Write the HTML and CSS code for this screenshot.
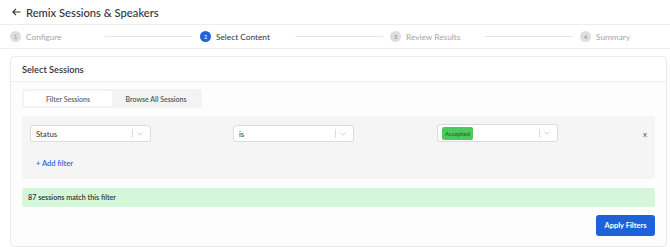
FILE: index.html
```html
<!DOCTYPE html>
<html lang="en">
<head>
    <meta charset="UTF-8">
    <meta name="viewport" content="width=device-width, initial-scale=1.0">
    <title>Remix Sessions &amp; Speakers</title>
    <link rel="stylesheet" href="styles.css">
</head>
<body>
    <header class="topbar">
        <svg class="back" width="9" height="8" viewBox="0 0 9 8"><path d="M8.5 4H1M4 0.8L0.9 4L4 7.2" fill="none" stroke="#333" stroke-width="1.1"/></svg>
        <h1 class="title">Remix Sessions &amp; Speakers</h1>
    </header>

    <nav class="steps">
        <div class="step">
            <div class="step-label"><span class="dot">1</span>Configure</div>
            <div class="step-line"></div>
        </div>
        <div class="step active">
            <div class="step-label"><span class="dot">2</span>Select Content</div>
            <div class="step-line"></div>
        </div>
        <div class="step">
            <div class="step-label"><span class="dot">3</span>Review Results</div>
            <div class="step-line"></div>
        </div>
        <div class="step">
            <div class="step-label"><span class="dot">4</span>Summary</div>
        </div>
    </nav>

    <main class="main">
        <section class="card">
            <div class="card-header">Select Sessions</div>
            <div class="card-body">
                <div class="tabs">
                    <div class="tab selected">Filter Sessions</div>
                    <div class="tab">Browse All Sessions</div>
                </div>

                <div class="filters">
                    <div class="filter-row">
                        <div class="select">
                            <span class="select-value">Status</span>
                            <span class="select-sep"></span>
                            <svg class="chev" width="6" height="4" viewBox="0 0 6 4"><path d="M0.5 0.7L3 3.2L5.5 0.7" fill="none" stroke="#c2c2c2" stroke-width="0.8"/></svg>
                        </div>
                        <div class="select">
                            <span class="select-value">is</span>
                            <span class="select-sep"></span>
                            <svg class="chev" width="6" height="4" viewBox="0 0 6 4"><path d="M0.5 0.7L3 3.2L5.5 0.7" fill="none" stroke="#c2c2c2" stroke-width="0.8"/></svg>
                        </div>
                        <div class="select tall">
                            <span class="select-value"><span class="badge">Accepted</span></span>
                            <span class="select-sep"></span>
                            <svg class="chev" width="6" height="4" viewBox="0 0 6 4"><path d="M0.5 0.7L3 3.2L5.5 0.7" fill="none" stroke="#c2c2c2" stroke-width="0.8"/></svg>
                        </div>
                        <span class="remove">x</span>
                    </div>
                    <div class="add-filter">+ Add filter</div>
                </div>

                <div class="match">87 sessions match this filter</div>

                <div class="actions">
                    <button type="button" class="apply">Apply Filters</button>
                </div>
            </div>
        </section>
    </main>
</body>
</html>
```

FILE: styles.css
```css
body {
    margin: 0;
    font-family: Lato, "Open Sans", sans-serif;
    color: #333;
    background: #fff;
}
.topbar {
    height: 24px;
    display: flex;
    align-items: center;
    padding-left: 12px;
    border-bottom: 1px solid #ececec;
}
.back {
    margin-right: 5px;
}
.title {
    margin: 0;
    font-size: 11.2px;
    font-weight: 500;
    color: #333;
}
.steps {
    height: 23px;
    display: flex;
    align-items: center;
    padding-left: 10px;
    border-bottom: 1px solid #ececec;
}
.step {
    display: flex;
    align-items: center;
    width: 190px;
    flex-shrink: 0;
}
.step:last-child {
    width: auto;
}
.step-label {
    width: 95px;
    display: flex;
    align-items: center;
    font-size: 8.3px;
    color: #a5a5a5;
}
.step.active .step-label {
    color: #333;
}
.dot {
    width: 11px;
    height: 11px;
    border-radius: 50%;
    background: #dedede;
    color: #888;
    font-size: 5.5px;
    display: flex;
    align-items: center;
    justify-content: center;
    margin-right: 5px;
}
.step.active .dot {
    background: #1f63d8;
    color: #fff;
}
.step-line {
    width: 88px;
    height: 1px;
    background: #e6e6e6;
}
.main {
    padding: 7px 3px 0 10px;
}
.card {
    border: 1px solid #e9e9e9;
    border-radius: 5px;
    box-shadow: 0 0 2px rgba(0, 0, 0, 0.04);
    background: #fdfdfd;
}
.card-header {
    height: 24px;
    display: flex;
    align-items: center;
    padding: 0 11px;
    font-size: 9.2px;
    font-weight: 600;
    background: #fff;
    border-bottom: 1px solid #eee;
    border-radius: 5px 5px 0 0;
}
.card-body {
    padding: 7px 11px 10px;
}
.tabs {
    display: flex;
    width: fit-content;
    padding: 2px;
    background: #f3f3f3;
    border-radius: 3px;
}
.tab {
    width: 88px;
    height: 15px;
    display: flex;
    align-items: center;
    justify-content: center;
    font-size: 7px;
    font-weight: 600;
    color: #555;
}
.tab.selected {
    background: #fff;
    border-radius: 2px;
    color: #666;
}
.filters {
    margin-top: 8px;
    height: 63px;
    box-sizing: border-box;
    padding: 9px 8px 0;
    background: #f5f5f5;
    border-radius: 3px;
}
.filter-row {
    display: grid;
    grid-template-columns: 203px 204px 1fr 12px;
    align-items: center;
}
.select {
    width: 121px;
    height: 17px;
    box-sizing: border-box;
    display: flex;
    align-items: center;
    background: #fff;
    border: 1px solid #dcdcdc;
    border-radius: 3px;
    padding: 0 5px;
}
.select.tall {
    height: 18px;
    margin-top: -1px;
    padding-left: 4px;
}
.select-value {
    flex: 1;
    font-size: 7.8px;
    color: #333;
    display: flex;
}
.select-sep {
    width: 1px;
    height: 9px;
    background: #dcdcdc;
    margin-right: 4px;
}
.chev {
    margin-right: 2px;
}
.badge {
    background: #4cc85c;
    color: #1f5a25;
    font-size: 6px;
    line-height: 7px;
    padding: 3px 3px;
    border-radius: 2px;
}
.remove {
    justify-self: end;
    font-size: 8px;
    color: #555;
}
.add-filter {
    margin-top: 17px;
    padding-left: 6px;
    font-size: 7.5px;
    font-weight: 600;
    color: #2a66d4;
}
.match {
    margin-top: 9px;
    height: 19px;
    display: flex;
    align-items: center;
    padding-left: 6px;
    background: #d4f6d9;
    border-radius: 3px;
    font-size: 7.2px;
    font-weight: 600;
    color: #333;
}
.actions {
    display: flex;
    justify-content: flex-end;
    margin-top: 8px;
}
.apply {
    width: 59px;
    height: 21px;
    border: none;
    border-radius: 3px;
    background: #1e62d8;
    color: #fff;
    font-family: inherit;
    font-size: 7.5px;
    font-weight: 700;
    padding: 0;
}
```
